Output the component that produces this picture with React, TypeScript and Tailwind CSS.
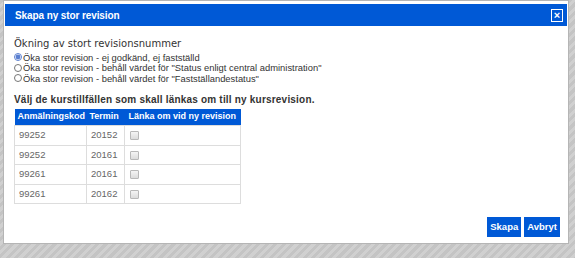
import React from 'react';

const rows = [
  { code: '99252', term: '20152' },
  { code: '99252', term: '20161' },
  { code: '99261', term: '20161' },
  { code: '99261', term: '20162' },
];

const options = [
  'Öka stor revision - ej godkänd, ej fastställd',
  'Öka stor revision - behåll värdet för "Status enligt central administration"',
  'Öka stor revision - behåll värdet för "Fastställandestatus"',
];

export default function App() {
  return (
    <div className="w-[575px] h-[258px] overflow-hidden bg-[repeating-linear-gradient(135deg,#c4c4c4_0px,#c4c4c4_3px,#d0d0d0_3px,#d0d0d0_6px)] pl-[3px] font-['Liberation_Sans',Arial,sans-serif]">
      <div className="w-[566px] h-[244px] bg-white border border-[#b5b5b5] p-px flex flex-col">
        <div className="h-[22px] mt-[2px] bg-[#0059d6] flex items-center justify-between pl-[10px] pr-[4px]">
          <span className="text-white text-[10px] font-bold tracking-[-0.1px]">Skapa ny stor revision</span>
          <button className="w-[12px] h-[13px] border border-white flex items-center justify-center text-white text-[11px] font-bold leading-none">
            ×
          </button>
        </div>

        <div className="flex-1 flex flex-col pl-[9px] pr-[7px] pt-[11px]">
          <div className="text-[10px] text-[#333] font-['DejaVu_Sans',Verdana,sans-serif] leading-[13px]">
            Ökning av stort revisionsnummer
          </div>
          <div className="mt-[2px] flex flex-col">
            {options.map((o, i) => (
              <label key={i} className="flex items-center h-[10.5px] text-[9.4px] text-[#333] leading-none">
                <input
                  type="radio"
                  name="rev"
                  defaultChecked={i === 0}
                  className="w-[8px] h-[8px] m-0 mr-px accent-[#5a7fd0]"
                />
                {o}
              </label>
            ))}
          </div>

          <div className="mt-[9px] text-[10px] font-bold text-[#333] tracking-[0.2px] leading-[13px]">
            Välj de kurstillfällen som skall länkas om till ny kursrevision.
          </div>

          <table className="mt-[3px] w-[227px] table-fixed border-collapse text-[9.5px]">
            <thead>
              <tr className="bg-[#0059d6] text-white h-[17px]">
                <th className="text-left font-bold text-[9px] whitespace-nowrap pl-[3px] w-[72px]">Anmälningskod</th>
                <th className="text-left font-bold text-[9px] whitespace-nowrap pl-[3px] w-[38px]">Termin</th>
                <th className="text-left font-bold text-[9px] whitespace-nowrap pl-[4px]">Länka om vid ny revision</th>
              </tr>
            </thead>
            <tbody>
              {rows.map((r, i) => (
                <tr key={i} className="h-[19.5px] text-[#666]">
                  <td className="border border-[#ddd] pl-[4px]">{r.code}</td>
                  <td className="border border-[#ddd] pl-[4px]">{r.term}</td>
                  <td className="border border-[#ddd] pl-[5px]">
                    <input
                      type="checkbox"
                      className="w-[9px] h-[9px] m-0 align-middle appearance-none border border-[#b8b8b8] rounded-[1px] bg-[linear-gradient(#f4f4f4,#dcdcdc)]"
                    />
                  </td>
                </tr>
              ))}
            </tbody>
          </table>

          <div className="mt-auto mb-[5px] flex justify-end gap-[3px]">
            <button className="h-[20px] px-[3px] bg-[#0059d6] text-white text-[9.5px] font-bold">Skapa</button>
            <button className="h-[20px] px-[3px] bg-[#0059d6] text-white text-[9.5px] font-bold">Avbryt</button>
          </div>
        </div>
      </div>
    </div>
  );
}
